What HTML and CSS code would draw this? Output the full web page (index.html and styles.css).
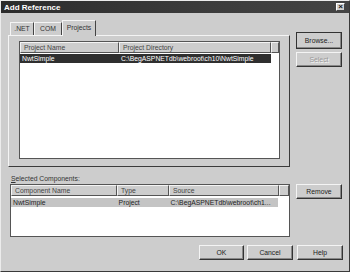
FILE: index.html
```html
<!DOCTYPE html>
<html>
<head>
<meta charset="utf-8">
<link rel="stylesheet" href="styles.css">
</head>
<body>
<div class="dialog">
  <div class="titlebar">
    <span class="title">Add Reference</span>
    <span class="close">×</span>
  </div>
  <div class="top">
    <div class="leftcol">
      <div class="tabs">
        <div class="tab">.NET</div>
        <div class="tab">COM</div>
        <div class="tab active">Projects</div>
      </div>
      <div class="panel">
        <div class="list list-top">
          <div class="hdr">
            <div class="hc c1">Project Name</div>
            <div class="hc c2">Project Directory</div>
            <div class="hc c3"></div>
          </div>
          <div class="row sel">
            <div class="rc c1">NwtSimple</div>
            <div class="rc c2">C:\BegASPNETdb\webroot\ch10\NwtSimple</div>
          </div>
        </div>
      </div>
    </div>
    <div class="rightcol">
      <div class="btn browse">Browse...</div>
      <div class="btn disabled">Select</div>
    </div>
  </div>
  <div class="mid">
    <div class="leftcol2">
      <div class="label"><u>S</u>elected Components:</div>
      <div class="list list-bottom">
        <div class="hdr">
          <div class="hc d1">Component Name</div>
          <div class="hc d2">Type</div>
          <div class="hc d3">Source</div>
          <div class="hc d4"></div>
        </div>
        <div class="row inact">
          <div class="rc d1">NwtSimple</div>
          <div class="rc d2">Project</div>
          <div class="rc d3">C:\BegASPNETdb\webroot\ch1...</div>
        </div>
      </div>
    </div>
    <div class="rightcol2">
      <div class="btn">Remove</div>
    </div>
  </div>
  <div class="footer">
    <div class="btn ok">OK</div>
    <div class="btn cancel">Cancel</div>
    <div class="btn help">Help</div>
  </div>
</div>
</body>
</html>
```

FILE: styles.css
```css
html, body {
  margin: 0;
  padding: 0;
  background: #cfcfcf;
}
.dialog {
  width: 350px;
  height: 272px;
  box-sizing: border-box;
  border: 1px solid;
  border-color: #ececec #3a3a3a #3a3a3a #ececec;
  background: #cdcdcd;
  font-family: "Liberation Sans", Arial, sans-serif;
  font-size: 6.8px;
  color: #222;
  display: flex;
  flex-direction: column;
}
.titlebar {
  height: 12px;
  background: linear-gradient(90deg, #2c2c2c, #3c3c3c 60%, #444);
  display: flex;
  align-items: center;
  justify-content: space-between;
  padding: 0 4px 0 3px;
}
.title {
  color: #fff;
  font-weight: bold;
  font-size: 8px;
}
.close {
  width: 9px;
  height: 8px;
  box-sizing: border-box;
  background: #cfcfcf;
  border: 1px solid;
  border-color: #fff #444 #444 #fff;
  font-size: 8px;
  line-height: 6px;
  text-align: center;
  color: #111;
  font-weight: bold;
}
.top {
  display: flex;
  margin-top: 7px;
  padding-left: 7px;
  gap: 6px;
}
.leftcol {
  width: 282px;
}
.tabs {
  display: flex;
  align-items: flex-end;
  height: 15px;
  padding-left: 2px;
}
.tab {
  height: 13px;
  box-sizing: border-box;
  padding: 0;
  text-align: center;
  border: 1px solid;
  border-bottom: none;
  border-color: #f4f4f4 #444 transparent #f4f4f4;
  line-height: 12px;
  color: #333;
  white-space: nowrap;
}
.tab:nth-child(1) { width: 24px; }
.tab:nth-child(2) { width: 28px; }
.tab.active {
  height: 16px;
  width: 34px;
  margin-bottom: -1px;
  background: #cdcdcd;
  position: relative;
  z-index: 1;
  line-height: 13px;
}
.panel {
  height: 132px;
  box-sizing: border-box;
  border: 1px solid;
  border-color: #f4f4f4 #3a3a3a #3a3a3a #f4f4f4;
  padding: 5px 9px 7px 10px;
}
.list {
  background: #fff;
  border: 1px solid #555;
  box-sizing: border-box;
}
.list-top {
  height: 118px;
  width: 261px;
}
.hdr {
  display: flex;
  height: 11px;
}
.hc {
  box-sizing: border-box;
  background: #cdcdcd;
  border: 1px solid;
  border-color: #f4f4f4 #555 #555 #f4f4f4;
  padding-left: 3px;
  line-height: 9px;
  color: #444;
  white-space: nowrap;
  overflow: hidden;
}
.c1 { width: 99px; }
.c2 { width: 152px; }
.c3 { flex: 1; }
.row {
  display: flex;
  height: 9px;
  margin-top: 1px;
  line-height: 9px;
}
.rc {
  box-sizing: border-box;
  padding-left: 2px;
  white-space: nowrap;
  overflow: hidden;
}
.row.sel .rc {
  background: #2f2f2f;
  color: #fff;
}
.rightcol {
  width: 46px;
  padding-top: 12px;
  display: flex;
  flex-direction: column;
  gap: 3px;
}
.btn {
  width: 46px;
  height: 15px;
  box-sizing: border-box;
  border: 1px solid;
  border-color: #f4f4f4 #333 #333 #f4f4f4;
  box-shadow: inset -1px -1px 0 #888;
  text-align: center;
  line-height: 13px;
  color: #222;
}
.btn.browse {
  height: 17px;
  line-height: 15px;
  outline: 1px solid #333;
  outline-offset: -1px;
}
.btn.disabled {
  color: #9a9a9a;
  text-shadow: 1px 1px 0 #f4f4f4;
}
.mid {
  display: flex;
  padding-left: 7px;
  gap: 6px;
  margin-top: 7px;
}
.leftcol2 {
  width: 282px;
}
.label {
  height: 10px;
  line-height: 9px;
  padding-left: 3px;
  color: #333;
}
.list-bottom {
  margin-left: 2px;
  width: 280px;
  height: 53px;
}
.d1 { width: 106px; }
.d2 { width: 52px; }
.d3 { width: 110px; }
.d4 { flex: 1; }
.row.inact {
  margin-top: 2px;
  width: 267px;
  background: #c4c4c4;
}
.rightcol2 {
  width: 46px;
  padding-top: 10px;
}
.footer {
  display: flex;
  justify-content: flex-end;
  margin-top: 8px;
  padding-right: 6px;
  gap: 3px;
}
.btn.ok { width: 45px; }
.btn.help { margin-left: 1px; }
```
